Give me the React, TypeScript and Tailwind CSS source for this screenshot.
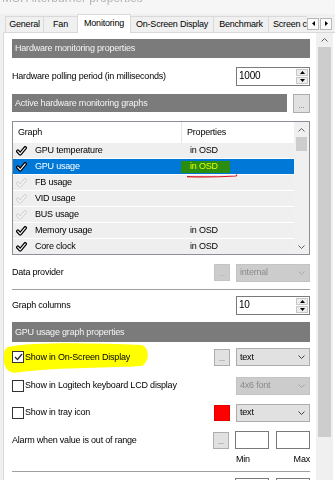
import React from "react";

type GraphRow = { name: string; on: boolean; props?: string; selected?: boolean };

const graphRows: GraphRow[] = [
  { name: "GPU temperature", on: true, props: "in OSD" },
  { name: "GPU usage", on: true, props: "in OSD", selected: true },
  { name: "FB usage", on: false },
  { name: "VID usage", on: false },
  { name: "BUS usage", on: false },
  { name: "Memory usage", on: true, props: "in OSD" },
  { name: "Core clock", on: true, props: "in OSD" },
  { name: "Memory clock", on: true, props: "in OSD" },
];

const tabs = [
  { label: "General", w: "w-[38px]" },
  { label: "Fan", w: "w-[34px]" },
  { label: "Monitoring", w: "w-[54px]", active: true },
  { label: "On-Screen Display", w: "w-[82px]", afterActive: true },
  { label: "Benchmark", w: "w-[55px]" },
];

function ChevronUp() {
  return (
    <svg width="7" height="4" viewBox="0 0 7 4">
      <polyline points="0.5,3.5 3.5,0.5 6.5,3.5" fill="none" stroke="#606060" strokeWidth="1" />
    </svg>
  );
}

function ChevronDown({ color = "#606060" }: { color?: string }) {
  return (
    <svg width="7" height="4" viewBox="0 0 7 4">
      <polyline points="0.5,0.5 3.5,3.5 6.5,0.5" fill="none" stroke={color} strokeWidth="1" />
    </svg>
  );
}

function ListCheck({ on }: { on: boolean }) {
  return (
    <svg width="11" height="10" viewBox="0 0 11 10">
      <path
        d="M1.8 5.2 L4.2 7.8 L9.2 1.8"
        fill="none"
        stroke={on ? "#000" : "#d6d6d6"}
        strokeWidth="3.6"
        strokeLinecap="round"
        strokeLinejoin="round"
      />
      <path
        d="M1.8 5.2 L4.2 7.8 L9.2 1.8"
        fill="none"
        stroke="#fff"
        strokeWidth="1.1"
        strokeLinecap="round"
        strokeLinejoin="round"
      />
    </svg>
  );
}

function SectionBar({ title, className = "" }: { title: string; className?: string }) {
  return (
    <div className={`flex items-center bg-[#7b7b7b] pl-[3px] text-[#f4f4f4] ${className}`}>
      {title}
    </div>
  );
}

function DotsButton({ disabled = false }: { disabled?: boolean }) {
  return (
    <div
      className={`flex h-[17px] w-[16px] items-end justify-center pb-[3px] border ${
        disabled ? "border-[#c4c4c4] bg-[#cccccc] text-[#9a9a9a]" : "border-[#adadad] bg-[#e1e1e1] text-[#555]"
      }`}
    >
      <span className="text-[7px] tracking-[0px]">...</span>
    </div>
  );
}

function Dropdown({ value, disabled = false }: { value: string; disabled?: boolean }) {
  return (
    <div
      className={`flex h-[18px] w-[74px] items-center border pl-[3px] pr-[4px] ${
        disabled ? "border-[#c4c4c4] bg-[#cccccc] text-[#8a8a8a]" : "border-[#adadad] bg-[#e1e1e1] text-black"
      }`}
    >
      <span>{value}</span>
      <span className="ml-auto">
        <ChevronDown color={disabled ? "#a8a8a8" : "#404040"} />
      </span>
    </div>
  );
}

function SpinBox({ value }: { value: string }) {
  return (
    <div className="flex h-[19px] w-[74px] border border-[#7a7a7a] bg-white">
      <div className="flex-1 pl-[2px] pt-[3px] text-[10px]">{value}</div>
      <div className="flex w-[13px] flex-col gap-px py-px pr-px">
        <div className="flex flex-1 items-center justify-center border border-[#c8c8c8] bg-[#ececec]">
          <svg width="5" height="3" viewBox="0 0 5 3">
            <polygon points="0,3 2.5,0 5,3" fill="#000" />
          </svg>
        </div>
        <div className="flex flex-1 items-center justify-center border border-[#c8c8c8] bg-[#ececec]">
          <svg width="5" height="3" viewBox="0 0 5 3">
            <polygon points="0,0 2.5,3 5,0" fill="#000" />
          </svg>
        </div>
      </div>
    </div>
  );
}

function CheckBox({ checked = false }: { checked?: boolean }) {
  return (
    <div className="flex h-[12px] w-[12px] shrink-0 items-center justify-center border border-[#333] bg-white">
      {checked && (
        <svg width="9" height="8" viewBox="0 0 9 8">
          <polyline points="1,4 3.5,6.5 8,1" fill="none" stroke="#222" strokeWidth="1.2" />
        </svg>
      )}
    </div>
  );
}

function Separator({ className = "" }: { className?: string }) {
  return <div className={`h-[2px] border-t border-b border-t-[#a0a0a0] border-b-white ${className}`} />;
}

function TabStrip() {
  return (
    <div className="relative z-10 flex h-[18px] items-end pl-[5px]">
      {tabs.map((t) =>
        t.active ? (
          <div
            key={t.label}
            className={`-mb-px flex h-[19px] ${t.w} items-center justify-center border-x border-t border-[#d9d9d9] bg-white pb-[2px]`}
          >
            {t.label}
          </div>
        ) : (
          <div
            key={t.label}
            className={`flex h-[16px] ${t.w} items-center justify-center border-t border-[#d9d9d9] bg-[#f0f0f0] ${
              t.afterActive ? "" : "border-l"
            }`}
          >
            {t.label}
          </div>
        )
      )}
      <div className="flex h-[16px] w-[39px] items-center overflow-hidden whitespace-nowrap border-l border-t border-[#d9d9d9] bg-[#f0f0f0] pl-[4px]">
        Screen capture
      </div>
      <div className="flex gap-px self-center pt-[1px]">
        <div className="flex h-[12px] w-[12px] items-center justify-center border border-[#b8b8b8] bg-[#fafafa]">
          <svg width="3" height="5" viewBox="0 0 3 5">
            <polygon points="3,0 0,2.5 3,5" fill="#000" />
          </svg>
        </div>
        <div className="flex h-[12px] w-[12px] items-center justify-center border border-[#b8b8b8] bg-[#fafafa]">
          <svg width="3" height="5" viewBox="0 0 3 5">
            <polygon points="0,0 3,2.5 0,5" fill="#000" />
          </svg>
        </div>
      </div>
    </div>
  );
}

function GraphList() {
  return (
    <div className="mt-[9px] flex h-[134px] border border-[#8b8f96] bg-white">
      <div className="flex w-[281px] flex-col overflow-hidden">
        <div className="flex h-[21px] shrink-0 items-center">
          <div className="flex h-full w-[168px] items-center pl-[5px]">Graph</div>
          <div className="h-full w-px bg-[#e5e5e5]" />
          <div className="pl-[5px]">Properties</div>
        </div>
        {graphRows.map((r) => (
          <div
            key={r.name}
            className={`flex h-[16px] shrink-0 items-center border-b border-white ${
              r.selected ? "bg-[#0078d7] text-white" : "bg-[#efefef]"
            }`}
          >
            <div className="flex w-[168px] items-center pl-[3px]">
              <ListCheck on={r.on} />
              <span className="ml-[8px]">{r.name}</span>
            </div>
            <div className="relative flex h-full items-center">
              {r.selected ? (
                <>
                  <span className="flex h-[12px] items-center bg-[#2a8d10] pl-[9px] pr-[12px] text-[#e8ff00]">
                    {r.props}
                  </span>
                  <svg
                    className="absolute left-[5px] top-[14px] z-10"
                    width="52"
                    height="5"
                    viewBox="0 0 52 5"
                  >
                    <path d="M1 3.6 C15 4.2, 35 3.8, 50 3 L51 1.5" fill="none" stroke="#e0101a" strokeWidth="1.2" />
                  </svg>
                </>
              ) : (
                <span className="pl-[9px]">{r.props ?? ""}</span>
              )}
            </div>
          </div>
        ))}
      </div>
      <div className="flex w-[15px] flex-col bg-[#f0f0f0]">
        <div className="flex h-[15px] shrink-0 items-center justify-center">
          <ChevronUp />
        </div>
        <div className="mx-[2px] h-[14px] shrink-0 bg-[#cdcdcd]" />
        <div className="flex-1" />
        <div className="flex h-[15px] shrink-0 items-center justify-center">
          <ChevronDown />
        </div>
      </div>
    </div>
  );
}

export default function App() {
  return (
    <div className="h-[480px] w-[335px] overflow-hidden bg-[#f0f0f0] font-['Liberation_Sans',Arial,sans-serif] text-[9px] leading-none tracking-[-0.2px] text-black">
      <div className="flex h-[14px] justify-between overflow-hidden bg-[#f6f6f6] px-[2px] text-[12px] tracking-normal text-[#b4b4b4]">
        <span className="-mt-[8px]">MSI Afterburner properties</span>
        <span className="-mt-[9px] mr-[8px]">✕</span>
      </div>
      <TabStrip />
      <div className="ml-[3px] flex h-[448px] border-l border-t border-[#d9d9d9] bg-white">
        <div className="ml-[8px] flex w-[298px] flex-col *:shrink-0">
          <SectionBar title="Hardware monitoring properties" className="mt-[6px] h-[19px]" />

          <div className="mt-[9px] flex h-[19px] items-center justify-between">
            <span>Hardware polling period (in milliseconds)</span>
            <SpinBox value="1000" />
          </div>

          <div className="mt-[8px] flex h-[18px] items-center gap-[6px]">
            <SectionBar title="Active hardware monitoring graphs" className="h-[18px] flex-1" />
            <div className="flex h-[19px] w-[17px] items-end justify-center border border-[#adadad] bg-[#e1e1e1] pb-[3px] text-[#555]">
              <span className="text-[7px] tracking-[0px]">...</span>
            </div>
          </div>

          <GraphList />

          <div className="mt-[9px] flex h-[17px] items-center">
            <span>Data provider</span>
            <div className="ml-auto flex items-center gap-[6px]">
              <DotsButton disabled />
              <Dropdown value="internal" disabled />
            </div>
          </div>

          <Separator className="mt-[8px]" />

          <div className="mt-[5px] flex h-[19px] items-center justify-between">
            <span>Graph columns</span>
            <SpinBox value="10" />
          </div>

          <SectionBar title="GPU usage graph properties" className="mt-[7px] h-[20px]" />

          <div className="relative mt-[6px] flex h-[18px] items-center">
            <svg
              className="pointer-events-none absolute left-[-10px] top-[-7px] mix-blend-multiply"
              width="148"
              height="34"
              viewBox="0 0 148 34"
            >
              <path
                d="M6 6 C30 1, 90 2, 139 4 C148 6, 148 20, 140 25 C110 27, 60 26, 18 31 C6 34, 1 26, 2 16 C2 10, 3 7, 6 6 Z"
                fill="#ffff00"
              />
            </svg>
            <div className="relative flex items-center gap-[1px]">
              <CheckBox checked />
              <span>Show in On-Screen Display</span>
            </div>
            <div className="ml-auto flex items-center gap-[6px]">
              <DotsButton />
              <Dropdown value="text" />
            </div>
          </div>

          <div className="mt-[11px] flex h-[17px] items-center">
            <div className="flex items-center gap-[1px]">
              <CheckBox />
              <span>Show in Logitech keyboard LCD display</span>
            </div>
            <div className="ml-auto">
              <Dropdown value="4x6 font" disabled />
            </div>
          </div>

          <div className="mt-[10px] flex h-[17px] items-center">
            <div className="flex items-center gap-[1px]">
              <CheckBox />
              <span>Show in tray icon</span>
            </div>
            <div className="ml-auto flex items-center gap-[6px]">
              <div className="h-[16px] w-[16px] border border-[#e00000] bg-[#ff0000]" />
              <Dropdown value="text" />
            </div>
          </div>

          <div className="mt-[10px] flex h-[18px] items-center">
            <span>Alarm when value is out of range</span>
            <div className="ml-auto flex items-center gap-[6px]">
              <DotsButton />
              <div className="flex gap-[7px]">
                <div className="h-[18px] w-[34px] border border-[#7a7a7a] bg-white" />
                <div className="h-[18px] w-[34px] border border-[#7a7a7a] bg-white" />
              </div>
            </div>
          </div>

          <div className="mt-[5px] flex h-[10px] items-center justify-end">
            <div className="flex w-[74px] justify-between">
              <span>Min</span>
              <span>Max</span>
            </div>
          </div>

          <Separator className="mt-[7px]" />

          <div className="mt-[5px] flex justify-end gap-[7px]">
            <div className="h-[18px] w-[34px] border border-[#7a7a7a] bg-white" />
            <div className="h-[18px] w-[34px] border border-[#7a7a7a] bg-white" />
          </div>
        </div>

        <div className="ml-[6px] flex w-[17px] flex-col bg-[#f0f0f0]">
          <div className="flex h-[14px] shrink-0 items-center justify-center">
            <ChevronUp />
          </div>
          <div className="mx-[2px] h-[390px] shrink-0 bg-[#cdcdcd]" />
        </div>
      </div>
    </div>
  );
}
